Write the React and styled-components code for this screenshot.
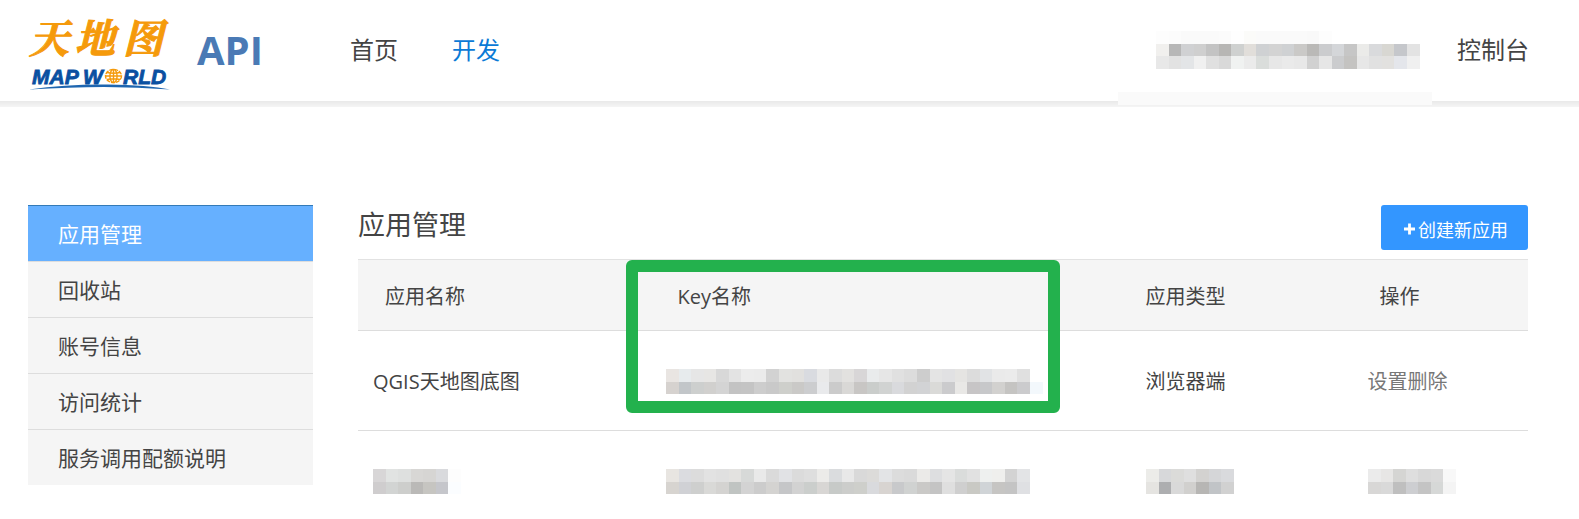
import React from 'react';
import styled, { createGlobalStyle } from 'styled-components';

const GlobalStyle = createGlobalStyle`
    * {
        box-sizing: border-box;
    }
    body {
        margin: 0;
        background: #fff;
        color: #444;
        font-family: "Open Sans", "Noto Sans CJK SC", sans-serif;
    }
    a {
        color: inherit;
        text-decoration: none;
    }
`;

const Header = styled.header`
    position: relative;
    display: flex;
    align-items: center;
    height: 107px;
    padding: 0 50px 8px 28px;
    background: linear-gradient(#fff, #fff) top / 100% 101px no-repeat, linear-gradient(#e9e9e9, #f5f5f5) bottom / 100% 6px no-repeat;
`;

const Brand = styled.a`
    display: flex;
    align-items: center;
`;

const Logo = styled.svg`
    display: block;
    width: 144px;
    height: 98px;
`;

const Product = styled.span`
    margin-left: 25px;
    color: #4a7ab5;
    font-size: 40px;
    font-weight: 700;
    line-height: 48px;
`;

const Nav = styled.nav`
    display: flex;
    flex: 1;
    gap: 54px;
    margin-left: 87px;
`;

const NavLink = styled.a`
    color: ${props => (props.$active ? '#0b7ad6' : '#444')};
    font-size: 24px;
    line-height: 36px;
`;

const Account = styled.div`
    display: flex;
    align-items: center;
    gap: 37px;
`;

const Strip = styled.div`
    position: absolute;
    right: 147px;
    bottom: 2px;
    width: 314px;
    height: 13px;
    background: #fafafa;
`;

const Page = styled.div`
    display: flex;
    align-items: flex-start;
    gap: 45px;
    padding: 98px 51px 0 28px;
`;

const SideMenu = styled.ul`
    flex: none;
    width: 285px;
    margin: 0;
    padding: 0;
    list-style: none;
`;

const SideItem = styled.li`
    border-top: 1px solid ${props => (props.$active ? '#337ab7' : '#ddd')};
    background: ${props => (props.$active ? '#66b0ff' : '#f5f5f5')};
    color: ${props => (props.$active ? '#fff' : '#444')};
    a {
        display: block;
        padding: 2px 0 0 30px;
        font-size: 21px;
        line-height: 53px;
    }
`;

const Main = styled.main`
    flex: 1;
    min-width: 0;
`;

const TitleBar = styled.div`
    display: flex;
    justify-content: space-between;
    align-items: flex-start;
    height: 54px;
`;

const Title = styled.h1`
    margin: 0;
    font-size: 27px;
    font-weight: 400;
    line-height: 40px;
`;

const CreateButton = styled.button`
    display: flex;
    align-items: center;
    gap: 1px;
    height: 45px;
    padding: 2px 20px 0 22px;
    border: 0;
    border-radius: 3px;
    background: #3396ff;
    color: #fff;
    font-family: inherit;
    font-size: 18px;
    svg {
        width: 14px;
        height: 14px;
    }
`;

const Table = styled.table`
    width: 100%;
    table-layout: fixed;
    border-spacing: 0;
    font-size: 20px;
    line-height: 30px;
    th {
        position: relative;
        height: 72px;
        padding: 3px 0 0 27px;
        border-top: 1px solid #e2e2e2;
        border-bottom: 1px solid #ddd;
        background: #f5f5f5;
        font-weight: 400;
        text-align: left;
    }
    td {
        height: 100px;
        padding: 2px 0 0 15px;
        border-bottom: 1px solid #ddd;
    }
    td:nth-child(3) {
        padding-left: 27px;
    }
`;

const Column = styled.col`
    width: ${props => props.$width};
`;

const Highlight = styled.div`
    position: absolute;
    z-index: 1;
    top: 0;
    left: -25px;
    right: 59px;
    height: 153px;
    border: 12px solid #23b14d;
    border-radius: 6px;
    pointer-events: none;
`;

const Action = styled.a`
    color: #777;
`;

const MosaicSvg = styled.svg`
    display: block;
    flex: none;
    shape-rendering: crispEdges;
`;

// every row is a list of hex colours without the leading #
const Mosaic = ({ rows }) => {
    const cells = rows.map(row => row.split(' '));
    const edge = i => Math.round(i * 12.55);
    return (
        <MosaicSvg width={edge(cells[0].length)} height={edge(cells.length)} aria-hidden="true">
            {cells.map((row, y) => row.map((color, x) => (
                <rect
                    key={`${x}-${y}`}
                    x={edge(x)}
                    y={edge(y)}
                    width={edge(x + 1) - edge(x)}
                    height={edge(y + 1) - edge(y)}
                    fill={`#${color}`}
                />
            )))}
        </MosaicSvg>
    );
};

const ACCOUNT = [
    'fdfdfd fcfcfc fafafa fafafa fafafa fbfbfb fefefe fbfbf9 fafafa fafafa fafafa fafafa f9f9f9 fdfdfd fff fff fff fff fff fff fff',
    'f1f0ee b7b7b7 d0d1d3 cfcfcf c3c3c3 b7b6b4 cfd1d0 e1deda cfd1d3 d3d3d3 cfd1d3 cac9c7 bab9b7 cbccce d4d6d9 c6c6c6 ebebe9 d9dadc d8d7d2 c5c7cb e3e3e3',
    'e8e8e8 e2e2e2 e3e5e7 f0f0f0 e0e0e0 d9d9d9 f0f2f1 ebebeb dadddb e7e7e7 eaeaea e8e8e8 d1d1d1 e6e6e6 cbccce c4c3c1 e7e7e7 e1e1e1 e2e1df e4e6eb f0f0f0',
];

const KEY_ONE = [
    'e9e5e2 e7ebed e6e6e6 e7e6e4 d8d8d8 e3e3e3 ececec ebebeb d2d2d2 e2e2e0 e1e0de d9dbe0 e9e9e9 dcdcdc e2e1df d8d6d7 e9ebec e6e6e6 e0e0e0 dcdcdc cdcdcd e4e4e4 e1e1e3 e5e4e2 dcdcdc e1e3e5 eaeaea ebebeb e0e0e0 fff',
    'd6d2cf c2c6c9 cdcfce d1d0ce d4d4d4 c3c3c3 c4c4c4 cdcdcd c9c9c9 cecfcb cac9c7 cccdcf e9eaec cbcbcb d9d8d6 c8c6c4 cacdcb d1d3d2 d9dadd d2d2d2 d2d3d5 dadad8 cbcbcd e9e8e6 c7c5c6 c7c8ca d2d1cf c5c4c2 cbcbcd f3f8fc',
];

const KEY_TWO = [
    'e8e5e1 dbdce0 dcdcdc e2e2e2 e0e0e0 e3e2e0 d7d9d8 e9e9e9 dadada e1e2e5 dbdbdb dedede ecebe9 dadcde e8e8e8 d9d9d9 dcdbd9 e3e4e6 dcdcdc dadada ebeae8 dddee0 e5e5e5 dadcdb e1e1e1 eef0ef efefed d3d3d3 e3e4e6',
    'd7d4d0 d0d1d5 cecfce d9d9d7 d4d3d1 c0c4c2 d3d3d3 cccccc d4d3d1 c5c6c8 d2d2d2 cbcecc d8d6d4 c7cac8 cccdcb cecfcb d9dadd d8d4d1 c8c9cb d0d2d1 cac9c7 c4c4c4 dfdfdf cfcfcf c9c9c4 d0d4d7 c6c5c3 c4c4c4 dfe0e3',
];

const NAME_TWO = [
    'd8d6d7 e1e3e2 dee0df d8d7d5 d6d5d3 d9dadd fdfdfd',
    'cfcdce d2d4d3 cdcecc bab9b7 c6c5c1 c5c6cb fbfdff',
];

const TYPE_TWO = [
    'ecece9 d7d8da dbdbd9 dfdfdf d3d2d0 d5d6d8 d9dadd',
    'e5e4e1 adaeb0 d9d9d9 d1d0ce b7b6b4 c1c4c7 d1d1d1',
];

const ACTION_TWO = [
    'ebebeb e7e6e5 d5d5d3 dedede d8d8d8 dadada f8f8f8',
    'd8d7d6 d9d9d9 bfbfbf cdced1 c4c4c4 d6d8d7 f4f4f4',
];

const menu = ['应用管理', '回收站', '账号信息', '访问统计', '服务调用配额说明'];

const MapWorldLogo = () => (
    <Logo viewBox="0 0 144 98">
        <g fill="#f59a0b" stroke="#f59a0b" fontFamily='"Noto Serif CJK SC", "Noto Sans CJK SC", sans-serif' fontSize="40" fontWeight="700" fontStyle="italic">
            <text x="1" y="52">天</text>
            <text x="47" y="52">地</text>
            <text x="95" y="52">图</text>
        </g>
        <g fill="#0a50a1" stroke="#0a50a1" strokeWidth="0.8" fontFamily='"Liberation Sans", sans-serif' fontSize="21" fontWeight="700" fontStyle="italic">
            <text x="4" y="83">MAP</text>
            <text x="55" y="83">W</text>
            <text x="95" y="83">RLD</text>
        </g>
        <g fill="none" stroke="#f59a0b" strokeWidth="1.4">
            <ellipse cx="85.500" cy="75" rx="8" ry="6.600" strokeDasharray="4 1" />
            <ellipse cx="85.500" cy="75" rx="3.600" ry="6.600" />
            <path d="M85.500 68v14M77.500 75h16M79 71.500q6.500 1.500 13 0M79 78.500q6.500-1.500 13 0" />
        </g>
        <path d="M1 88.500Q40 83 80 83.500T142 88.500Q110 86 76 86T1 88.500z" fill="#1e66b0" />
    </Logo>
);

const App = () => {
    return (
        <>
            <GlobalStyle />
            <Header>
                <Brand href="#">
                    <MapWorldLogo />
                    <Product>API</Product>
                </Brand>
                <Nav>
                    <NavLink href="#">首页</NavLink>
                    <NavLink href="#" $active>开发</NavLink>
                </Nav>
                <Account>
                    <Mosaic rows={ACCOUNT} />
                    <NavLink href="#">控制台</NavLink>
                </Account>
                <Strip />
            </Header>
            <Page>
                <SideMenu>
                    {menu.map((label, i) => (
                        <SideItem key={label} $active={i === 0}>
                            <a href="#">{label}</a>
                        </SideItem>
                    ))}
                </SideMenu>
                <Main>
                    <TitleBar>
                        <Title>应用管理</Title>
                        <CreateButton type="button">
                            <svg viewBox="0 0 14 14" aria-hidden="true">
                                <path d="M1 7h11M6.500 1.500v11" stroke="#fff" strokeWidth="2.800" />
                            </svg>
                            创建新应用
                        </CreateButton>
                    </TitleBar>
                    <Table>
                        <colgroup>
                            <Column $width="25%" />
                            <Column $width="40%" />
                            <Column $width="20%" />
                            <Column $width="15%" />
                        </colgroup>
                        <thead>
                            <tr>
                                <th>应用名称</th>
                                <th>Key名称<Highlight /></th>
                                <th>应用类型</th>
                                <th>操作</th>
                            </tr>
                        </thead>
                        <tbody>
                            <tr>
                                <td>QGIS天地图底图</td>
                                <td><Mosaic rows={KEY_ONE} /></td>
                                <td>浏览器端</td>
                                <td>
                                    <Action href="#">设置</Action>
                                    <Action href="#">删除</Action>
                                </td>
                            </tr>
                            <tr>
                                <td><Mosaic rows={NAME_TWO} /></td>
                                <td><Mosaic rows={KEY_TWO} /></td>
                                <td><Mosaic rows={TYPE_TWO} /></td>
                                <td><Mosaic rows={ACTION_TWO} /></td>
                            </tr>
                        </tbody>
                    </Table>
                </Main>
            </Page>
        </>
    );
};

export default App;
